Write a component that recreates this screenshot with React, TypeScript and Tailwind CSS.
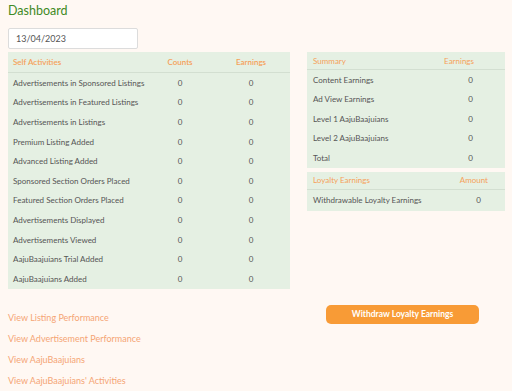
import React from "react";

const selfRows = [
  "Advertisements in Sponsored Listings",
  "Advertisements in Featured Listings",
  "Advertisements in Listings",
  "Premium Listing Added",
  "Advanced Listing Added",
  "Sponsored Section Orders Placed",
  "Featured Section Orders Placed",
  "Advertisements Displayed",
  "Advertisements Viewed",
  "AajuBaajuians Trial Added",
  "AajuBaajuians Added",
];

const summaryRows = [
  "Content Earnings",
  "Ad View Earnings",
  "Level 1 AajuBaajuians",
  "Level 2 AajuBaajuians",
  "Total",
];

const links = [
  "View Listing Performance",
  "View Advertisement Performance",
  "View AajuBaajuians",
  "View AajuBaajuians' Activities",
];

export default function App() {
  return (
    <div
      className="w-[512px] h-[391px] bg-[#fff8f3] text-[#555] overflow-hidden"
      style={{ fontFamily: "Lato, 'Noto Sans', sans-serif" }}
    >
      <div className="pl-[8px] pt-[2px]">
        <div className="text-[12.5px] leading-[17px] text-[#3f8a25]">Dashboard</div>
        <div className="mt-[9px] w-[130px] h-[21px] bg-white border border-[#dcdcdc] rounded-[2px] flex items-center pl-[7px] text-[9px] text-[#555]">
          13/04/2023
        </div>
        <div className="mt-[3px] flex gap-[17px] items-start">
          <div className="w-[282px] bg-[#e5f0e3] text-[8px]">
            <div className="grid grid-cols-[140px_64px_78px] h-[21px] items-center border-b border-[#d3dfd1] text-[#f5a15a] font-semibold">
              <div className="pl-[5px]">Self Activities</div>
              <div className="text-center">Counts</div>
              <div className="text-center">Earnings</div>
            </div>
            {selfRows.map((r) => (
              <div key={r} className="grid grid-cols-[140px_64px_78px] h-[19.6px] items-center">
                <div className="pl-[5px] whitespace-nowrap">{r}</div>
                <div className="text-center">0</div>
                <div className="text-center">0</div>
              </div>
            ))}
          </div>
          <div className="w-[198px] flex flex-col gap-[4px] text-[8px]">
            <div className="bg-[#e5f0e3]">
              <div className="flex justify-between h-[18px] items-center border-b border-[#d3dfd1] text-[#f5a15a] pl-[6px] pr-[31px]">
                <div>Summary</div>
                <div>Earnings</div>
              </div>
              {summaryRows.map((r) => (
                <div key={r} className="flex justify-between h-[19.5px] items-center pl-[6px] pr-[32px]">
                  <div>{r}</div>
                  <div>0</div>
                </div>
              ))}
            </div>
            <div className="bg-[#e5f0e3]">
              <div className="flex justify-between h-[18px] items-center border-b border-[#d3dfd1] text-[#f5a15a] pl-[6px] pr-[17px]">
                <div>Loyalty Earnings</div>
                <div>Amount</div>
              </div>
              <div className="flex justify-between h-[21px] items-center pl-[6px] pr-[24px]">
                <div>Withdrawable Loyalty Earnings</div>
                <div>0</div>
              </div>
            </div>
          </div>
        </div>
        <div className="mt-[16px] flex gap-[17px] items-start">
          <div className="w-[282px] flex flex-col pt-[3px] text-[9px] text-[#f5a575]">
            {links.map((l) => (
              <div key={l} className="h-[21px] flex items-center whitespace-nowrap">
                {l}
              </div>
            ))}
          </div>
          <div className="w-[198px] flex pl-[19px]">
            <div className="w-[153px] h-[19px] rounded-[5px] bg-[#f89b36] text-white font-bold text-[8.5px] flex items-center justify-center">
              Withdraw Loyalty Earnings
            </div>
          </div>
        </div>
      </div>
    </div>
  );
}
